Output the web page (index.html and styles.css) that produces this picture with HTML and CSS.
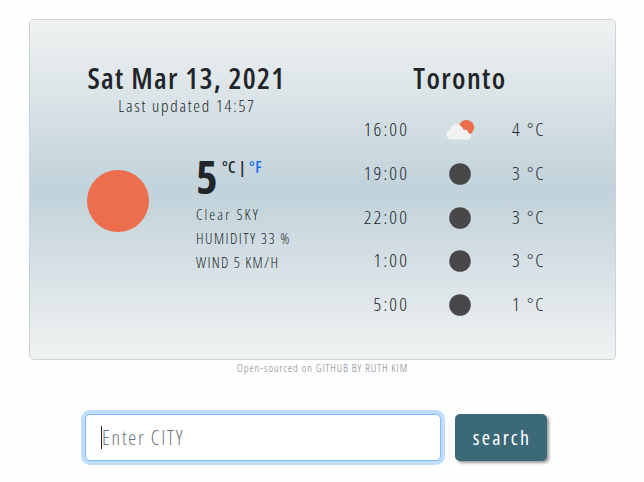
FILE: index.html
```html
<!DOCTYPE html>
<html lang="en">
<head>
<meta charset="utf-8">
<title>Weather</title>
<link rel="stylesheet" href="styles.css">
</head>
<body>
<main class="app">
  <section class="card">
    <div class="current">
      <h1 class="date">Sat Mar 13, 2021</h1>
      <p class="updated">Last updated 14:57</p>
      <div class="now">
        <div class="sun"></div>
        <div class="details">
          <div class="temperature"><strong>5</strong><span class="units">°C | <a>°F</a></span></div>
          <p class="sky">Clear SKY</p>
          <p class="humidity">HUMIDITY 33 %</p>
          <p class="wind">WIND 5 KM/H</p>
        </div>
      </div>
    </div>
    <div class="forecast">
      <h2 class="city">Toronto</h2>
      <div class="hour"><span class="time">16:00</span><svg class="icon" viewBox="0 0 30 24"><circle cx="21.5" cy="9.5" r="7.6" fill="#eb6e4b"/><path d="M6 21.5a5.2 5.2 0 0 1-.7-10.1A6.2 6.2 0 0 1 16.6 8.8c1.3 1.2 1.6 2 2 3.1 3-.7 4.8.8 4.9 3.1 4 1 3.2 6.5-.8 6.5z" fill="#f2f2f2"/></svg><span class="degree">4 °C</span></div>
      <div class="hour"><span class="time">19:00</span><svg class="icon" viewBox="0 0 30 24"><circle cx="15" cy="12" r="10.8" fill="#48484a"/></svg><span class="degree">3 °C</span></div>
      <div class="hour"><span class="time">22:00</span><svg class="icon" viewBox="0 0 30 24"><circle cx="15" cy="12" r="10.8" fill="#48484a"/></svg><span class="degree">3 °C</span></div>
      <div class="hour"><span class="time">1:00</span><svg class="icon" viewBox="0 0 30 24"><circle cx="15" cy="12" r="10.8" fill="#48484a"/></svg><span class="degree">3 °C</span></div>
      <div class="hour"><span class="time">5:00</span><svg class="icon" viewBox="0 0 30 24"><circle cx="15" cy="12" r="10.8" fill="#48484a"/></svg><span class="degree">1 °C</span></div>
    </div>
  </section>
  <p class="credit">Open-sourced on GITHUB BY RUTH KIM</p>
  <div class="search">
    <div class="field"><span class="caret"></span><span class="placeholder">Enter CITY</span></div>
    <button class="submit"><span>search</span></button>
  </div>
</main>
</body>
</html>
```

FILE: styles.css
```css
* { box-sizing: border-box; }
body { margin: 0; background: #fefefe; color: #212529; font-family: "Open Sans", "Liberation Sans Narrow", sans-serif; font-stretch: 75%; font-weight: 300; }
h1, h2, p { margin: 0; white-space: nowrap; }
.app { width: 644px; height: 482px; padding: 19px 28px 0 29px; }
.card { display: flex; height: 341px; padding: 39px 0 0 57px; border: 1px solid #cbd5d8; border-radius: 5px; background: linear-gradient(#f0f2f2, #c1d2da 50%, #f0f2f2); }
.current { width: 200px; }
.date, .city { font-size: 29px; line-height: 38px; font-weight: 600; text-align: center; }
.date { letter-spacing: 1.3px; text-indent: -1px; }
.updated { font-size: 17px; line-height: 18px; text-align: center; letter-spacing: 1.75px; }
.now { display: flex; margin-top: 44px; }
.sun { flex: none; width: 62px; height: 62px; margin-top: 11px; border-radius: 50%; background: #ec6e4c; }
.details { flex: none; margin-left: 47px; }
.temperature { display: flex; height: 44px; margin-top: -1px; }
.temperature strong { width: 26px; font-size: 46px; line-height: 37px; font-weight: 700; }
.units { font-size: 16px; line-height: 19px; font-weight: 600; white-space: pre; letter-spacing: .3px; }
.units a { color: #1b70f5; }
.sky, .humidity, .wind { font-size: 15px; line-height: 24px; }
.sky { letter-spacing: 2.1px; }
.humidity { letter-spacing: 1.45px; }
.wind { letter-spacing: 1.3px; }
.forecast { width: 240px; margin-left: 55px; }
.city { width: 210px; margin-left: 13px; margin-bottom: 13px; letter-spacing: 1.4px; }
.hour { display: grid; grid-template-columns: 67px 103px 60px; height: 43.75px; align-items: start; font-size: 19px; line-height: 38px; }
.time { text-align: right; white-space: nowrap; letter-spacing: 2.1px; }
.degree { white-space: nowrap; letter-spacing: 1.7px; }
.icon { width: 30px; height: 24px; margin: 8px 0 0 35.5px; }
.credit { height: 16px; font-size: 11px; line-height: 15px; text-align: center; letter-spacing: .88px; color: #78828b; }
.search { display: flex; margin: 38px 0 0 56px; }
.field { display: flex; align-items: center; width: 356px; height: 47px; padding-left: 15px; border: 1px solid #80bdff; border-radius: 5px; background: #fff; box-shadow: 0 0 0 4px #bfdeff; }
.caret { width: 1px; height: 23px; background: #222; }
.placeholder { font-size: 20px; line-height: 28px; letter-spacing: 1.8px; color: #6c757d; }
.submit { width: 92px; height: 47px; margin-left: 14px; padding: 0; border: 0; border-radius: 5px; background: #3b6977; color: #fff; box-shadow: 2px 2px 3px #999; font: inherit; font-size: 20px; font-stretch: 75%; font-weight: 400; letter-spacing: 2.2px; text-indent: 2px; }
```
